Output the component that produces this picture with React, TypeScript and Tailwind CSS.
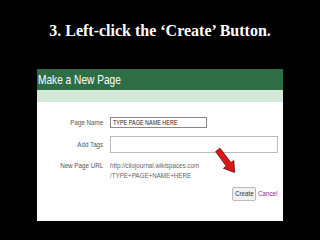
function Narrow({ children, right }: { children: React.ReactNode; right?: boolean }) {
  return (
    <span className={`inline-block whitespace-nowrap scale-x-[0.78] ${right ? 'origin-right' : 'origin-left'}`}>
      {children}
    </span>
  )
}

export default function App() {
  return (
    <div className="w-[320px] h-[240px] bg-black overflow-hidden flex flex-col items-center">
      <h1 className="mt-[20px] h-[22px] text-white font-bold text-[16px] leading-[22px] [font-family:'Liberation_Serif',serif]">
        3. Left-click the ‘Create’ Button.
      </h1>

      <div className="relative mt-[27px] w-[246px] h-[152px] bg-white flex flex-col [font-family:'Liberation_Sans',sans-serif]">
        <div className="h-[21px] bg-[#2f6d47] text-white text-[13px] leading-[21px] pl-[1px]">
          <Narrow>Make a New Page</Narrow>
        </div>
        <div className="h-[12px] bg-[#d2e8d9]" />

        <div className="flex flex-col pt-[15px] text-[8px] text-[#555]">
          <div className="flex items-center gap-[7px] h-[11px]">
            <div className="w-[66px] text-right"><Narrow right>Page Name</Narrow></div>
            <div className="w-[97px] h-[11px] border border-[#888] text-[7px] leading-[9px] pl-[2px] text-[#222]">
              <Narrow>TYPE PAGE NAME HERE</Narrow>
            </div>
          </div>

          <div className="flex items-center gap-[7px] h-[17px] mt-[8px]">
            <div className="w-[66px] text-right"><Narrow right>Add Tags</Narrow></div>
            <div className="w-[168px] h-[17px] border border-[#bbb]" />
          </div>

          <div className="flex items-start gap-[7px] mt-[8px]">
            <div className="w-[66px] text-right leading-[10px]"><Narrow right>New Page URL</Narrow></div>
            <div className="leading-[10px] text-[#666]">
              <div><Narrow>http://cliojournal.wikispaces.com</Narrow></div>
              <div><Narrow>/TYPE+PAGE+NAME+HERE</Narrow></div>
            </div>
          </div>

          <div className="flex items-center justify-end gap-[2px] mt-[6px] pr-[5px]">
            <div className="w-[24px] h-[14px] border border-[#bbb] rounded-[2px] bg-[#f2f2f2] text-[#333] leading-[12px] pl-[2px] overflow-hidden">
              <Narrow>Create</Narrow>
            </div>
            <div className="w-[20px] text-[#8a2a9a]"><Narrow>Cancel</Narrow></div>
          </div>
        </div>

        <svg className="absolute left-[178px] top-[78px]" width="24" height="28" viewBox="0 0 24 28">
          <polygon
            points="5,1.2 15.9,15.6 18.8,13.5 19.6,25.5 8.4,21.3 11.3,19.2 0.6,4.6"
            fill="#e01414"
            stroke="#5a0a0a"
            strokeWidth="0.8"
          />
        </svg>
      </div>
    </div>
  )
}
